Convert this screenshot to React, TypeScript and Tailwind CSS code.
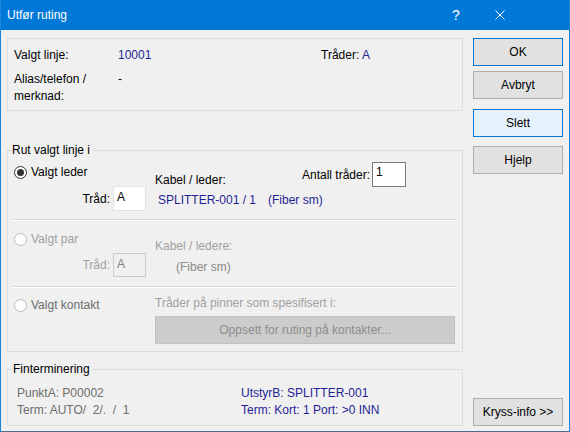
import React from 'react';

const FONT = 'font-["Segoe_UI","Liberation_Sans",Arial,sans-serif]';
const BLUE_TEXT = 'text-[#1f1f96]';

type RadioProps = { checked?: boolean; disabled?: boolean; label: string; labelClass: string };

const Radio: React.FC<RadioProps> = ({ checked, disabled, label, labelClass }) => (
  <div className="flex items-center h-[16px] pl-[2px]">
    <span
      className={`w-[13px] h-[13px] rounded-full border flex items-center justify-center bg-white ${
        disabled ? 'border-[#bcbcbc]' : 'border-[#333333]'
      }`}
    >
      {checked && <span className="w-[7px] h-[7px] rounded-full bg-[#333333]" />}
    </span>
    <span className={`ml-[4px] leading-[16px] ${labelClass}`}>{label}</span>
  </div>
);

const Separator = () => (
  <div>
    <div className="h-px bg-[#d9d9d9]" />
    <div className="h-px bg-white" />
  </div>
);

const DialogButton: React.FC<{ label: string; variant?: 'default' | 'hover' | 'normal'; className?: string }> = ({
  label,
  variant = 'normal',
  className = '',
}) => {
  const look =
    variant === 'default'
      ? 'bg-[#e1e1e1] border-[#0078d7]'
      : variant === 'hover'
      ? 'bg-[#e5f1fb] border-[#0078d7]'
      : 'bg-[#e1e1e1] border-[#adadad]';
  return (
    <div className={`h-[28px] w-[90px] border flex items-center justify-center text-black ${look} ${className}`}>
      {label}
    </div>
  );
};

export default function App() {
  return (
    <div
      className={`w-[570px] h-[432px] bg-[#f0f0f0] border-x border-b border-x-[#1b83d8] border-b-[#4b6d8f] flex flex-col text-[12px] leading-[16px] text-black ${FONT}`}
    >
      {/* Title bar */}
      <div className="h-[30px] bg-[#0078d7] flex items-center pl-[6px] text-white shrink-0">
        <span className="text-[12px]">Utfør ruting</span>
        <div className="flex-1" />
        <div className="w-[44px] flex justify-center text-[14px] font-light">?</div>
        <div className="w-[44px] flex justify-center">
          <svg width="10" height="10" viewBox="0 0 10 10">
            <path d="M0.5 0.5 L9.5 9.5 M9.5 0.5 L0.5 9.5" stroke="white" strokeWidth="1" fill="none" />
          </svg>
        </div>
        <div className="w-[47px]" />
      </div>

      {/* Body */}
      <div className="flex flex-1 pt-[8px] pl-[6px] pr-[5px] pb-[6px]">
        {/* Left column */}
        <div className="w-[456px] flex flex-col">
          {/* Selected line info */}
          <div className="h-[73px] border border-[#dcdcdc] pt-[8px] pl-[6px]">
            <div className="flex">
              <span className="w-[104px] shrink-0">Valgt linje:</span>
              <span className={`w-[203px] shrink-0 ${BLUE_TEXT}`}>10001</span>
              <span>
                Tråder: <span className={BLUE_TEXT}>A</span>
              </span>
            </div>
            <div className="flex mt-[8px] leading-[17px]">
              <span className="w-[104px]">
                Alias/telefon /
                <br />
                merknad:
              </span>
              <span>-</span>
            </div>
          </div>

          {/* Route selected line */}
          <fieldset className="mt-[31px] border border-[#dcdcdc] px-[4px] pb-[7px]">
            <legend className="pr-[2px] leading-[16px]">Rut valgt linje i</legend>

            {/* Valgt leder */}
            <div className="flex">
              <div className="w-[143px] pr-[9px]">
                <div className="mt-[6px]">
                  <Radio checked label="Valgt leder" labelClass="text-black" />
                </div>
                <div className="mt-[6px] flex items-center justify-end">
                  <span>Tråd:</span>
                  <span className="ml-[3px] w-[33px] h-[25px] bg-white border border-[#e3e3e3] pl-[3px] pt-[2px]">A</span>
                </div>
              </div>
              <div className="flex-1">
                <div className="flex items-start">
                  <span className="w-[147px] mt-[14px]">Kabel / leder:</span>
                  <div className="mt-[4px] flex items-center">
                    <span>Antall tråder:</span>
                    <span className="ml-[2px] w-[34px] h-[25px] bg-white border border-[#7a7a7a] pl-[3px] pt-[1px]">1</span>
                  </div>
                </div>
                <div className={`mt-[4px] pl-[3px] flex ${BLUE_TEXT}`}>
                  <span className="w-[110px]">SPLITTER-001 / 1</span>
                  <span>(Fiber sm)</span>
                </div>
              </div>
            </div>

            <div className="mt-[8px]">
              <Separator />
            </div>

            {/* Valgt par */}
            <div className="flex">
              <div className="w-[143px] pr-[9px]">
                <div className="mt-[10px]">
                  <Radio disabled label="Valgt par" labelClass="text-[#a0a0a0]" />
                </div>
                <div className="mt-[6px] flex items-center justify-end">
                  <span className="text-[#a0a0a0]">Tråd:</span>
                  <span className="ml-[3px] w-[33px] h-[24px] bg-[#f0f0f0] border border-[#cccccc] pl-[3px] pt-[2px] text-[#838383]">
                    A
                  </span>
                </div>
              </div>
              <div className="flex-1 text-[#a0a0a0]">
                <div className="mt-[17px]">Kabel / ledere:</div>
                <div className="mt-[5px] pl-[21px] text-[#8a8a8a]">(Fiber sm)</div>
              </div>
            </div>

            <div className="mt-[9px]">
              <Separator />
            </div>

            {/* Valgt kontakt */}
            <div className="flex">
              <div className="w-[143px]">
                <div className="mt-[9px]">
                  <Radio disabled label="Valgt kontakt" labelClass="text-[#6d6d6d]" />
                </div>
              </div>
              <div className="flex-1">
                <div className="mt-[7px] text-[#a0a0a0]">Tråder på pinner som spesifisert i:</div>
                <div className="mt-[5px] w-[300px] h-[28px] bg-[#cccccc] border border-[#c2c2c2] flex items-center justify-center text-[#8c8c8c]">
                  Oppsett for ruting på kontakter...
                </div>
              </div>
            </div>
          </fieldset>

          {/* Finterminering */}
          <fieldset className="mt-[9px] border border-[#dcdcdc] px-[4px] pb-[6px] flex-1">
            <legend className="pr-[2px] pl-px leading-[16px]">Finterminering</legend>
            <div className="flex mt-[8px] pl-[5px] leading-[17px]">
              <div className="w-[224px] text-[#6d6d6d]">
                <div>PunktA: P00002</div>
                <div className="whitespace-pre">Term: AUTO/  2/.  /  1</div>
              </div>
              <div className={BLUE_TEXT}>
                <div>UtstyrB: SPLITTER-001</div>
                <div>Term: Kort: 1 Port: &gt;0 INN</div>
              </div>
            </div>
          </fieldset>
        </div>

        {/* Right column: buttons */}
        <div className="ml-[10px] w-[90px] flex flex-col">
          <DialogButton label="OK" variant="default" />
          <DialogButton label="Avbryt" className="mt-[5px]" />
          <DialogButton label="Slett" variant="hover" className="mt-[10px]" />
          <DialogButton label="Hjelp" className="mt-[9px]" />
          <div className="flex-1" />
          <DialogButton label="Kryss-info >>" />
        </div>
      </div>
    </div>
  );
}
